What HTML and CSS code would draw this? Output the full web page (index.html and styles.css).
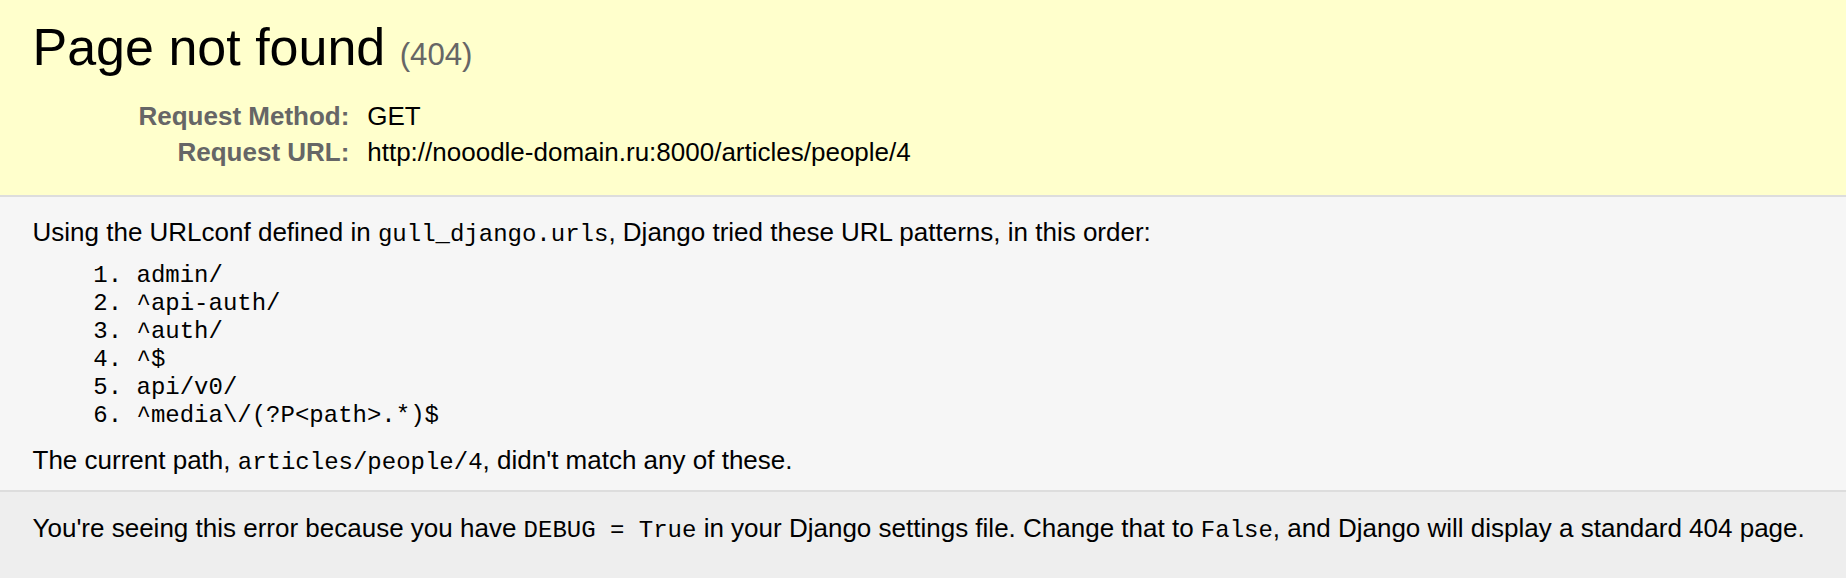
FILE: index.html
```html
<!DOCTYPE html>
<html lang="en">
<head>
<meta charset="utf-8">
<title>Page not found at /articles/people/4</title>
<link rel="stylesheet" href="styles.css">
</head>
<body>
<header class="summary">
  <h1 class="title">Page not found <small class="status">(404)</small></h1>
  <table class="meta">
    <tr>
      <th class="meta-key">Request Method:</th>
      <td class="meta-val">GET</td>
    </tr>
    <tr>
      <th class="meta-key">Request URL:</th>
      <td class="meta-val">http://nooodle-domain.ru:8000/articles/people/4</td>
    </tr>
  </table>
</header>
<main class="info">
  <p class="para">Using the URLconf defined in <code class="code">gull_django.urls</code>, Django tried these URL patterns, in this order:</p>
  <ol class="patterns">
    <li class="pattern">admin/</li>
    <li class="pattern">^api-auth/</li>
    <li class="pattern">^auth/</li>
    <li class="pattern">^$</li>
    <li class="pattern">api/v0/</li>
    <li class="pattern">^media\/(?P&lt;path&gt;.*)$</li>
  </ol>
  <p class="para">The current path, <code class="code">articles/people/4</code>, didn't match any of these.</p>
</main>
<footer class="explanation">
  <p class="para">You're seeing this error because you have <code class="code">DEBUG = True</code> in your Django settings file. Change that to <code class="code">False</code>, and Django will display a standard 404 page.</p>
</footer>
</body>
</html>
```
FILE: styles.css
```css
html, body {
  margin: 0;
  padding: 0;
}
body {
  font-family: "Liberation Sans", Arial, Helvetica, sans-serif;
  font-size: 26px;
  background: #eee;
  color: #000;
}
.summary {
  background: #ffc;
  padding: 17px 32.5px 24.3px;
  border-bottom: 2px solid #ddd;
}
.title {
  margin: 0 0 20.7px;
  font-size: 52px;
  line-height: 60px;
  font-weight: normal;
}
.status {
  font-size: 31.2px;
  line-height: 1;
  color: #666;
  font-weight: normal;
}
.meta {
  border: none;
  border-collapse: collapse;
  width: 100%;
}
.meta-key, .meta-val {
  vertical-align: top;
  padding: 3.25px 4.875px;
  line-height: 30px;
  font-size: 26px;
}
.meta-key {
  width: 312px;
  text-align: right;
  color: #666;
  padding-right: 13px;
  font-weight: bold;
}
.info {
  background: #f6f6f6;
  padding: 17.8px 32.5px 13.2px;
  border-bottom: 2px solid #ddd;
}
.para {
  margin: 0;
  line-height: 34px;
}
.code {
  font-family: "Liberation Mono", "Courier New", monospace;
  font-size: 24px;
  line-height: 1;
}
.patterns {
  margin: 13px 0 13px 104px;
  padding: 0;
}
.pattern {
  font-family: "Liberation Mono", "Courier New", monospace;
  font-size: 24px;
  line-height: 28px;
}
.explanation {
  background: #eee;
  padding: 18.7px 32.5px 16.25px;
}
```
